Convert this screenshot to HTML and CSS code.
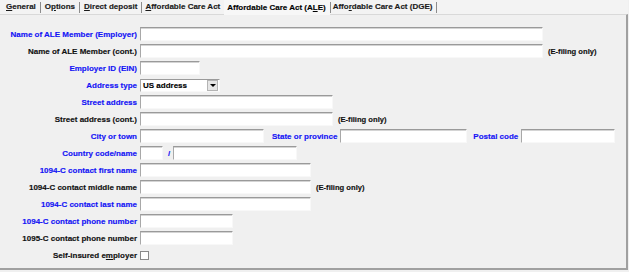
FILE: index.html
```html
<!DOCTYPE html>
<html>
<head>
<meta charset="utf-8">
<link rel="stylesheet" href="styles.css">
</head>
<body>
<div class="app">
  <div class="tabs">
    <span class="tab"><u>G</u>eneral</span>
    <span class="sep"></span>
    <span class="tab">O<u>p</u>tions</span>
    <span class="sep"></span>
    <span class="tab"><u>D</u>irect deposit</span>
    <span class="sep"></span>
    <span class="tab tab-aca"><u>A</u>ffordable Care Act</span>
    <span class="tab active">Affordable Care Act (A<u>L</u>E)</span>
    <span class="sep"></span>
    <span class="tab tab-dge">Affo<u>r</u>dable Care Act (DGE)</span>
    <span class="sep"></span>
  </div>
  <div class="panel">
    <div class="row"><span class="lbl req">Name of ALE Member (Employer)</span><span class="field w403"></span></div>
    <div class="row"><span class="lbl">Name of ALE Member (cont.)</span><span class="field w403"></span><span class="note">(E-filing only)</span></div>
    <div class="row"><span class="lbl req">Employer ID (EIN)</span><span class="field w60"></span></div>
    <div class="row"><span class="lbl req">Address type</span><span class="select"><span class="select-text">US address</span><span class="select-btn"><span class="arrow"></span></span></span></div>
    <div class="row"><span class="lbl req">Street address</span><span class="field w193"></span></div>
    <div class="row"><span class="lbl">Street address (cont.)</span><span class="field w193"></span><span class="note">(E-filing only)</span></div>
    <div class="row"><span class="lbl req">City or town</span><span class="field w124"></span><span class="inl req state">State or province</span><span class="field w127"></span><span class="inl req postal">Postal code</span><span class="field w94"></span></div>
    <div class="row"><span class="lbl req">Country code/name</span><span class="field w23"></span><span class="slash req">/</span><span class="field w124"></span></div>
    <div class="row"><span class="lbl req">1094-C contact first name</span><span class="field w171"></span></div>
    <div class="row"><span class="lbl">1094-C contact middle name</span><span class="field w171"></span><span class="note">(E-filing only)</span></div>
    <div class="row"><span class="lbl req">1094-C contact last name</span><span class="field w171"></span></div>
    <div class="row"><span class="lbl req">1094-C contact phone number</span><span class="field w93"></span></div>
    <div class="row"><span class="lbl">1095-C contact phone number</span><span class="field w93"></span></div>
    <div class="row"><span class="lbl">Self-insured e<u>m</u>ployer</span><span class="check"></span></div>
  </div>
</div>
</body>
</html>
```
FILE: styles.css
```css
html, body {
  margin: 0;
  padding: 0;
  background: #f0f0f0;
}
body {
  font-family: "Liberation Sans", Arial, sans-serif;
  font-weight: bold;
  font-size: 8px;
  color: #111;
  -webkit-text-stroke: 0.15px currentColor;
}
.app {
  width: 628px;
  height: 270px;
}
.tabs {
  height: 14px;
  display: flex;
  align-items: center;
  padding-left: 2px;
  background: #f3f3f3;
}
.tab {
  padding: 0 4px;
  line-height: 14px;
  white-space: nowrap;
  color: #1a1a1a;
}
.tab u {
  text-underline-offset: 1px;
}
.tab-aca {
  padding-left: 3px;
}
.tab.active {
  color: #000;
  background: #f7f7f7;
  height: 15px;
  line-height: 15px;
  margin-top: 1px;
  padding-left: 3px;
}
.tab-dge {
  padding-left: 2px;
}
.sep {
  width: 1px;
  height: 11px;
  background: #8c8c8c;
  flex: none;
}
.panel {
  box-sizing: border-box;
  height: 256px;
  border-top: 1px solid #d9d9d9;
  border-right: 2px solid #a0a0a0;
  border-bottom: 2px solid #a0a0a0;
  padding-top: 12px;
  display: flex;
  flex-direction: column;
  gap: 3px;
  background: #f0f0f0;
}
.row {
  display: flex;
  align-items: center;
  height: 14px;
}
.lbl {
  width: 137px;
  margin-right: 3px;
  text-align: right;
  white-space: nowrap;
  flex: none;
}
.req {
  color: #1414f5;
}
.field {
  box-sizing: border-box;
  height: 14px;
  background: #fff;
  border-top: 1px solid #9a9a9a;
  border-left: 1px solid #a8a8a8;
  border-right: 1px solid #f8f8f8;
  border-bottom: 1px solid #f8f8f8;
  box-shadow: inset 0 1px 0 #d4d4d4;
  flex: none;
}
.w403 { width: 403px; }
.w60 { width: 60px; }
.w193 { width: 193px; }
.w124 { width: 124px; }
.w127 { width: 127px; }
.w94 { width: 94px; }
.w23 { width: 23px; }
.w171 { width: 171px; }
.w93 { width: 93px; }
.note {
  margin-left: 5px;
  white-space: nowrap;
  font-size: 7.6px;
}
.inl {
  white-space: nowrap;
  margin-right: 3px;
}
.state {
  margin-left: 8px;
}
.postal {
  margin-left: 6px;
}
.slash {
  margin-left: 5px;
  margin-right: 3px;
}
.select {
  box-sizing: border-box;
  width: 80px;
  height: 13px;
  display: flex;
  align-items: center;
  background: #fff;
  border-top: 1px solid #9a9a9a;
  border-left: 1px solid #a8a8a8;
  border-right: 1px solid #f8f8f8;
  border-bottom: 1px solid #f8f8f8;
  flex: none;
}
.select-text {
  flex: 1;
  padding-left: 2px;
  color: #000;
  white-space: nowrap;
}
.select-btn {
  box-sizing: border-box;
  width: 11px;
  height: 11px;
  margin-right: 1px;
  background: #e6e6e6;
  border: 1px solid #b4b4b4;
  display: flex;
  align-items: center;
  justify-content: center;
}
.arrow {
  width: 0;
  height: 0;
  border-left: 3px solid transparent;
  border-right: 3px solid transparent;
  border-top: 3px solid #000;
}
.check {
  box-sizing: border-box;
  width: 9px;
  height: 9px;
  background: #fff;
  border: 1px solid #8a8a8a;
  flex: none;
}
```
